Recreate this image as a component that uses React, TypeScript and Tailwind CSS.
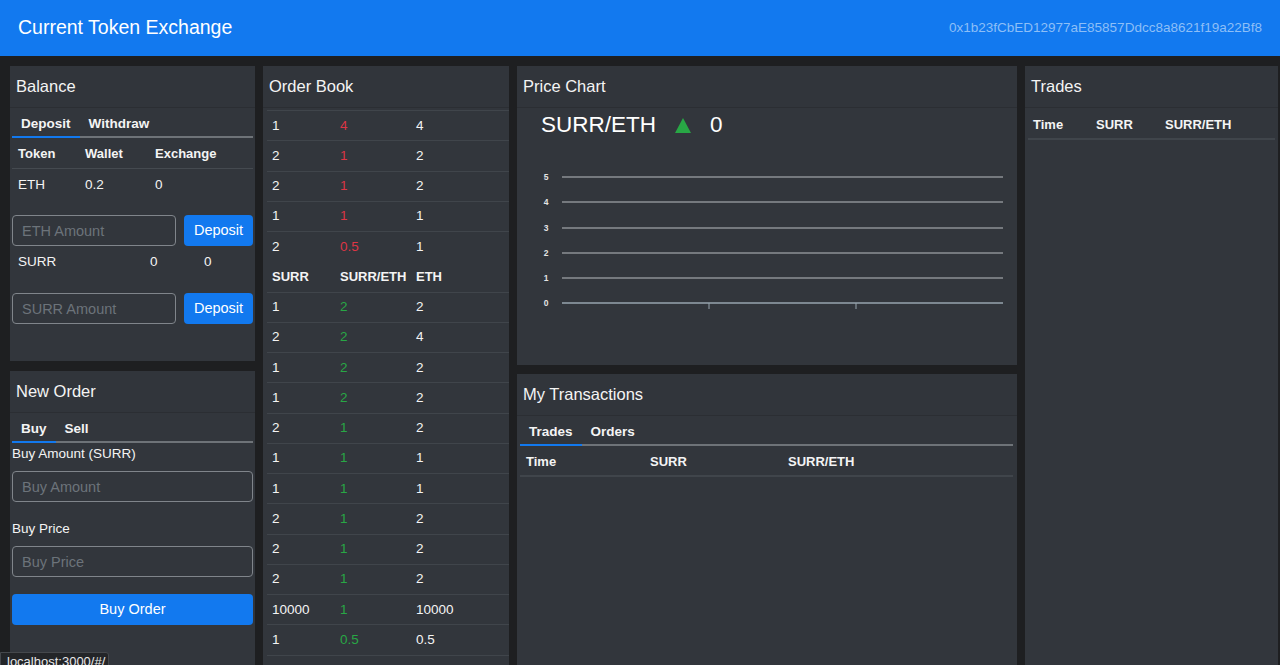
import React from "react";

const font = { fontFamily: '"Liberation Sans", Arial, sans-serif' };

type Row = [string, string, string];

const sellOrders: Row[] = [
  ["1", "4", "4"],
  ["2", "1", "2"],
  ["2", "1", "2"],
  ["1", "1", "1"],
  ["2", "0.5", "1"],
];

const buyOrders: Row[] = [
  ["1", "2", "2"],
  ["2", "2", "4"],
  ["1", "2", "2"],
  ["1", "2", "2"],
  ["2", "1", "2"],
  ["1", "1", "1"],
  ["1", "1", "1"],
  ["2", "1", "2"],
  ["2", "1", "2"],
  ["2", "1", "2"],
  ["10000", "1", "10000"],
  ["1", "0.5", "0.5"],
  ["0.2", "0.25", "0.05"],
];

function Card({
  title,
  className = "",
  children,
}: {
  title: string;
  className?: string;
  children?: React.ReactNode;
}) {
  return (
    <div className={`bg-[#32363c] flex flex-col overflow-hidden ${className}`}>
      <div className="h-[42px] shrink-0 flex items-center px-[6px] text-[16.5px] text-[#f4f4f4] bg-[#31353b] border-b border-[#2b2e33]">
        {title}
      </div>
      {children}
    </div>
  );
}

function Tabs({ items }: { items: string[] }) {
  return (
    <div className="flex border-b-2 border-[#6e7378] text-[13.5px] leading-[16px] font-bold text-[#f4f4f4]">
      {items.map((t, i) => (
        <div
          key={t}
          className={`px-[9px] pt-[8px] pb-[4px] -mb-[2px] border-b-2 ${
            i === 0 ? "border-[#1279ef]" : "border-transparent"
          }`}
        >
          {t}
        </div>
      ))}
    </div>
  );
}

const inputCls =
  "h-[31px] rounded-[4px] border border-[#80858b] bg-transparent px-[9px] text-[14.5px] text-white placeholder:text-[#6c737a] outline-none";

function AmountRow({ placeholder }: { placeholder: string }) {
  return (
    <div className="flex gap-2">
      <input placeholder={placeholder} className={`flex-1 min-w-0 ${inputCls}`} />
      <button className="w-[69px] h-[31px] rounded-[4px] bg-[#1279ef] text-white text-[14.5px]">
        Deposit
      </button>
    </div>
  );
}

function Balance() {
  return (
    <Card title="Balance" className="h-[295px] shrink-0">
      <div className="px-[2px] text-[#f4f4f4]">
        <Tabs items={["Deposit", "Withdraw"]} />
        <div className="flex h-[31px] pt-[2px] items-center border-b border-[#454a50] text-[13px] font-bold">
          <div className="w-[73px] pl-[6px]">Token</div>
          <div className="w-[70px]">Wallet</div>
          <div>Exchange</div>
        </div>
        <div className="flex h-[31px] pt-[2px] items-center text-[13.5px]">
          <div className="w-[73px] pl-[6px]">ETH</div>
          <div className="w-[70px]">0.2</div>
          <div>0</div>
        </div>
        <div className="mt-[15px]">
          <AmountRow placeholder="ETH Amount" />
        </div>
        <div className="flex h-[31px] pt-[2px] items-center text-[13.5px]">
          <div className="w-[138px] pl-[6px]">SURR</div>
          <div className="w-[54px]">0</div>
          <div>0</div>
        </div>
        <div className="mt-[16px]">
          <AmountRow placeholder="SURR Amount" />
        </div>
      </div>
    </Card>
  );
}

function NewOrder() {
  return (
    <Card title="New Order" className="flex-1 mt-[10px]">
      <div className="px-[2px] text-[#f4f4f4]">
        <Tabs items={["Buy", "Sell"]} />
        <div className="h-[20px] pt-[2px] flex items-center text-[13.5px]">Buy Amount (SURR)</div>
        <input placeholder="Buy Amount" className={`mt-[8px] w-full ${inputCls}`} />
        <div className="mt-[16px] h-[20px] pt-[2px] flex items-center text-[13.5px]">Buy Price</div>
        <input placeholder="Buy Price" className={`mt-[8px] w-full ${inputCls}`} />
        <button className="mt-[17px] w-full h-[31px] rounded-[4px] bg-[#1279ef] text-white text-[14.5px]">
          Buy Order
        </button>
      </div>
    </Card>
  );
}

function BookRow({ row, color }: { row: Row; color: string }) {
  return (
    <div className="flex h-[30.25px] items-center border-t border-[#40454b] text-[13.5px] text-[#f4f4f4]">
      <div className="w-[73px] pl-[5px]">{row[0]}</div>
      <div className={`w-[76px] ${color}`}>{row[1]}</div>
      <div>{row[2]}</div>
    </div>
  );
}

function OrderBook() {
  return (
    <Card title="Order Book" className="h-full">
      <div className="pl-[4px] mt-[2px]">
        {sellOrders.map((r, i) => (
          <BookRow key={"s" + i} row={r} color="text-[#dc3545]" />
        ))}
        <div className="flex h-[30.25px] items-center border-t border-transparent text-[13px] font-bold text-[#f4f4f4]">
          <div className="w-[73px] pl-[5px]">SURR</div>
          <div className="w-[76px]">SURR/ETH</div>
          <div>ETH</div>
        </div>
        {buyOrders.map((r, i) => (
          <BookRow key={"b" + i} row={r} color="text-[#28a745]" />
        ))}
      </div>
    </Card>
  );
}

function Chart() {
  const ys = [37, 62, 88, 113, 138];
  return (
    <svg width="500" height="180" viewBox="0 0 500 180" className="block">
      {ys.map((y, i) => (
        <g key={y}>
          <line x1="45" x2="486" y1={y} y2={y} stroke="#8d9094" strokeWidth="1.5" />
          <text
            x="29"
            y={y + 3}
            textAnchor="middle"
            fontSize="8.5"
            fontWeight="bold"
            fill="#e4e4e4"
            fontFamily="Liberation Sans, Arial, sans-serif"
          >
            {5 - i}
          </text>
        </g>
      ))}
      <line x1="45" x2="486" y1="163" y2="163" stroke="#97a4ae" strokeWidth="1.5" />
      <line x1="192" x2="192" y1="163" y2="169" stroke="#97a4ae" strokeWidth="1" />
      <line x1="339" x2="339" y1="163" y2="169" stroke="#97a4ae" strokeWidth="1" />
      <text
        x="29"
        y="166"
        textAnchor="middle"
        fontSize="8.5"
        fontWeight="bold"
        fill="#e4e4e4"
        fontFamily="Liberation Sans, Arial, sans-serif"
      >
        0
      </text>
    </svg>
  );
}

function PriceChart() {
  return (
    <Card title="Price Chart" className="h-[299px] shrink-0">
      <div className="h-[32px] pt-[2px] flex items-center pl-[24px] text-[22.5px] text-white">
        <span>SURR/ETH</span>
        <svg width="16" height="15" viewBox="0 0 16 15" className="ml-[19px]">
          <polygon points="8,0 16,15 0,15" fill="#28a745" />
        </svg>
        <span className="ml-[19px]">0</span>
      </div>
      <Chart />
    </Card>
  );
}

function MyTransactions() {
  return (
    <Card title="My Transactions" className="flex-1 mt-[9px]">
      <div className="pl-[3px] pr-[4px] text-[#f4f4f4]">
        <Tabs items={["Trades", "Orders"]} />
        <div className="flex h-[31px] pt-[3px] items-center border-b-2 border-[#40454b] text-[13px] font-bold">
          <div className="w-[130px] pl-[6px]">Time</div>
          <div className="w-[138px]">SURR</div>
          <div>SURR/ETH</div>
        </div>
      </div>
    </Card>
  );
}

function Trades() {
  return (
    <Card title="Trades" className="h-full">
      <div className="pl-[3px] pr-[3px] text-[#f4f4f4]">
        <div className="flex h-[32px] pt-[3px] items-center border-b-2 border-[#40454b] text-[13px] font-bold">
          <div className="w-[68px] pl-[5px]">Time</div>
          <div className="w-[69px]">SURR</div>
          <div>SURR/ETH</div>
        </div>
      </div>
    </Card>
  );
}

export default function App() {
  return (
    <div style={font} className="relative h-[665px] overflow-hidden bg-[#1e1f21] flex flex-col">
      <div className="h-[56px] shrink-0 bg-[#1279ef] flex items-center justify-between px-[18px]">
        <div className="text-[19.5px] text-white">Current Token Exchange</div>
        <div className="text-[13.5px] text-[#8dbff7]">0x1b23fCbED12977aE85857Ddcc8a8621f19a22Bf8</div>
      </div>
      <div className="flex-1 min-h-0 flex gap-2 pl-[10px] pt-[10px]">
        <div className="w-[245px] flex flex-col">
          <Balance />
          <NewOrder />
        </div>
        <div className="w-[246px]">
          <OrderBook />
        </div>
        <div className="w-[500px] flex flex-col">
          <PriceChart />
          <MyTransactions />
        </div>
        <div className="w-[253px]">
          <Trades />
        </div>
      </div>
      <div className="absolute left-0 bottom-[-6px] h-[19px] pl-[6px] pr-[3px] bg-[#232528] border border-[#45484c] rounded-tr-[3px] text-[13px] leading-[17px] text-[#e8e8e8]">
        localhost:3000/#/
      </div>
    </div>
  );
}
